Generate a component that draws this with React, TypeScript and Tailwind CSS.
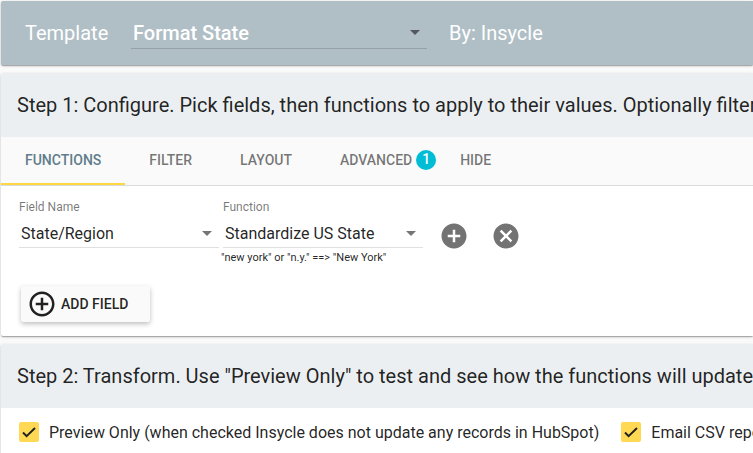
import { useState } from "react";
import type { ReactNode } from "react";
import { MdArrowDropDown, MdAddCircle, MdCancel, MdAddCircleOutline } from "react-icons/md";

const tabs = [
    { name: "Functions" },
    { name: "Filter" },
    { name: "Layout" },
    { name: "Advanced", count: 1 },
    { name: "Hide" },
];

const cardShadow = "shadow-[0_1px_3px_rgba(0,0,0,0.2),0_1px_1px_rgba(0,0,0,0.14),0_2px_1px_-1px_rgba(0,0,0,0.12)]";

const Card = ({ title, children }: { title: string; children: ReactNode }) => {
    return (
        <section className={`ml-px rounded-l-xs overflow-hidden bg-white ${cardShadow}`}>
            <h2 className="h-16 flex items-center px-4 bg-[#eceff1] text-xl whitespace-nowrap">{title}</h2>
            {children}
        </section>
    );
};

const Field = ({ id, label, value, hint }: { id: string; label: string; value: string; hint?: string }) => {
    return (
        <div className="w-[200px] flex flex-col">
            <label htmlFor={id} className="text-xs leading-4 text-black/54">{label}</label>
            <div className="relative mt-1 border-b border-black/12">
                <select id={id} className="appearance-none block w-full h-7 pt-0.5 pl-0.5 pr-6 bg-transparent text-base outline-none">
                    <option>{value}</option>
                </select>
                <MdArrowDropDown className="absolute right-0 top-0.5 size-6 text-black/54 pointer-events-none" />
            </div>
            {hint && <p className="-ml-0.5 mt-0.5 text-[11px] leading-4 whitespace-nowrap">{hint}</p>}
        </div>
    );
};

const Check = ({ label }: { label: string }) => {
    const [checked, setChecked] = useState(true);

    return (
        <label className="flex items-start gap-2.5 shrink-0 text-base leading-[22px]">
            <span className="grid size-5">
                <input
                    type="checkbox"
                    checked={checked}
                    onChange={e => setChecked(e.target.checked)}
                    className="peer col-start-1 row-start-1 appearance-none size-5 rounded-xs border-2 border-black/54 checked:border-0 checked:bg-[#ffd953]"
                />
                <svg viewBox="0 0 20 20" className="col-start-1 row-start-1 size-5 pointer-events-none opacity-0 peer-checked:opacity-100" fill="none" stroke="#212121" strokeWidth="2">
                    <path d="M4 10.5 L7.6 14.1 L16 6" />
                </svg>
            </span>
            {label}
        </label>
    );
};

const App = () => {
    const [active, setActive] = useState("Functions");

    return (
        <div className="min-h-screen overflow-hidden flex flex-col gap-2 pt-px bg-[#fafafa] text-black/87 font-[Roboto,sans-serif]">
            <header className={`ml-px h-16 flex items-center pl-6 rounded-l-xs bg-[#b0bec5] text-white text-xl ${cardShadow}`}>
                <label htmlFor="template" className="w-[84px]">Template</label>
                <div className="relative w-[296px] ml-[22px] border-b border-black/15">
                    <select id="template" className="appearance-none block w-full h-[30px] pl-0.5 pr-6 bg-transparent font-medium outline-none">
                        <option>Format State</option>
                    </select>
                    <MdArrowDropDown className="absolute right-0 top-0.5 size-6 text-black/54 pointer-events-none" />
                </div>
                <span className="ml-[22px]">By: Insycle</span>
            </header>

            <Card title="Step 1: Configure. Pick fields, then functions to apply to their values. Optionally filter the records.">
                <nav className="h-[49px] flex bg-[#fafafa] border-b border-black/12 text-sm font-medium">
                    {tabs.map(tab => (
                        <button
                            key={tab.name}
                            onClick={() => setActive(tab.name)}
                            className={`flex items-center gap-1 px-6 uppercase border-b-2 ${active === tab.name ? "border-[#ffd740] text-[#607d8b]" : "border-transparent text-black/54"}`}
                        >
                            {tab.name}
                            {tab.count && <span className="size-5 -mr-6 rounded-full bg-[#00bcd4] text-white leading-[18px]">{tab.count}</span>}
                        </button>
                    ))}
                </nav>
                <div className="px-[18px] pt-[13px] pb-3.5">
                    <div className="flex items-start gap-1">
                        <Field id="field-name" label="Field Name" value="State/Region" />
                        <Field id="function" label="Function" value="Standardize US State" hint={'"new york" or "n.y." ==> "New York"'} />
                        <div className="flex gap-[22px] ml-3 mt-[22px] text-[#737373]">
                            <button aria-label="Add function"><MdAddCircle className="size-[30px]" /></button>
                            <button aria-label="Remove function"><MdCancel className="size-[30px]" /></button>
                        </div>
                    </div>
                    <button className="mt-5 ml-0.5 h-9 flex items-center gap-1 pl-1.5 pr-[22px] rounded-xs bg-[#fafafa] text-sm font-medium uppercase shadow-[0_2px_5px_rgba(0,0,0,0.26)]">
                        <MdAddCircleOutline className="size-[30px]" />
                        Add field
                    </button>
                </div>
            </Card>

            <Card title={'Step 2: Transform. Use "Preview Only" to test and see how the functions will update your records.'}>
                <div className="flex gap-[22px] px-[18px] py-3.5">
                    <Check label="Preview Only (when checked Insycle does not update any records in HubSpot)" />
                    <Check label="Email CSV report" />
                </div>
            </Card>
        </div>
    );
};

export default App;
